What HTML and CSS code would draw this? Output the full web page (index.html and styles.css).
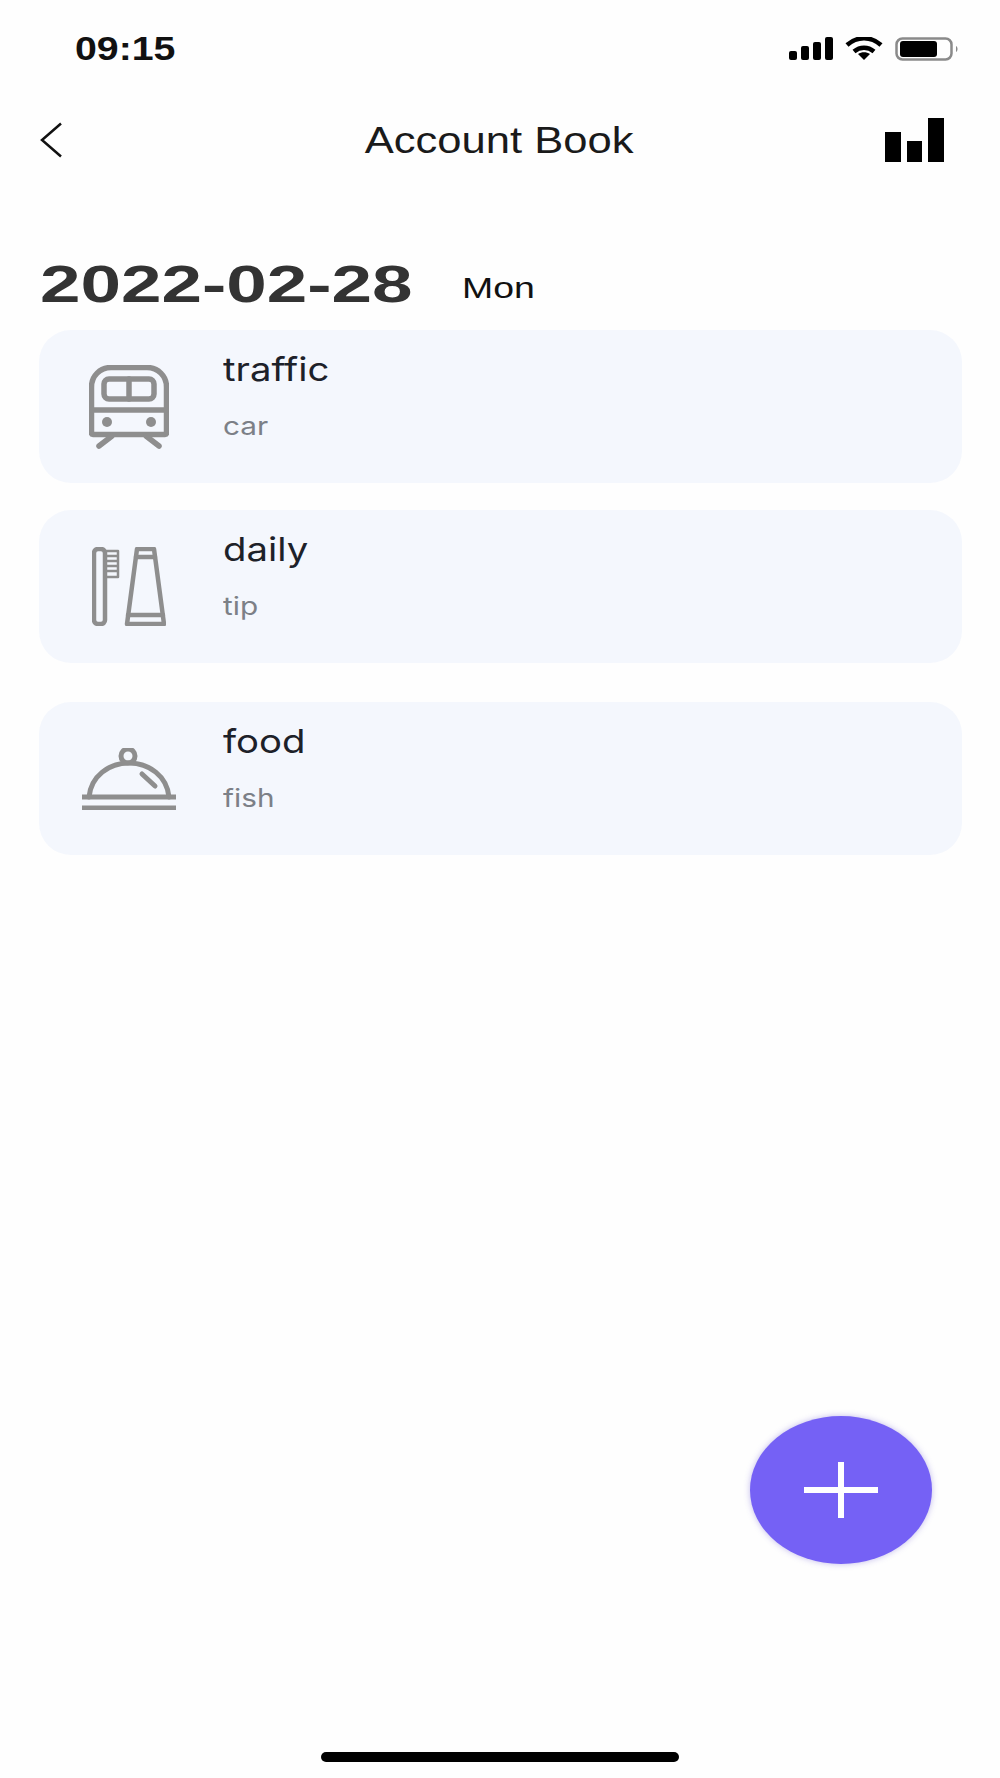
FILE: index.html
```html
<!DOCTYPE html>
<html>
<head>
	<meta charset="utf-8">
	<meta name="viewport" content="width=device-width,initial-scale=1.0">
	<title>Account Book</title>
	<link rel="stylesheet" href="styles.css">
</head>
<body>
	<div class="page">
		<!-- status bar -->
		<div class="status-bar">
			<span class="time">09:15</span>
			<div class="status-icons">
				<svg width="44" height="23" viewBox="0 0 44 23"><rect x="0" y="14" width="8" height="9" rx="2"/><rect x="12" y="9" width="8" height="14" rx="2"/><rect x="24" y="5" width="8" height="18" rx="2"/><rect x="36" y="0" width="8" height="23" rx="2"/></svg>
				<svg width="38" height="23" viewBox="0 0 38 23"><path class="wifi-arc" d="M2 8C12-1 26-1 36 8"/><path class="wifi-arc" d="M9 14.500C15 9.500 23 9.500 29 14.500"/><path d="M19 23L13 17C16.500 14.500 21.500 14.500 25 17Z"/></svg>
				<svg width="64" height="24" viewBox="0 0 64 24"><rect class="batt-case" x="1.500" y="1.500" width="55" height="21" rx="6"/><rect x="5" y="4" width="37" height="16" rx="3"/><path class="batt-nub" d="M61 9C63 10 63 14 61 15Z"/></svg>
			</div>
		</div>

		<!-- title bar -->
		<header class="nav">
			<svg class="back" width="24" height="36" viewBox="1 0 24 36"><path d="M22 1.500L3 18L22 34.500"/></svg>
			<h1 class="nav-title">Account Book</h1>
			<svg class="chart" width="59" height="44" viewBox="0 0 59 44"><rect x="0" y="14" width="16" height="30"/><rect x="22" y="23" width="15" height="21"/><rect x="43" y="0" width="16" height="44"/></svg>
		</header>

		<div class="date-row">
			<span class="date">2022-02-28</span>
			<span class="weekday">Mon</span>
		</div>

		<main class="list">
			<div class="item">
				<div class="item-icon">
					<svg class="icon-train" width="80" height="84" viewBox="0 0 80 84"><path d="M2.500 68V22C2.500 11 11 2.500 22 2.500H58C69 2.500 77.500 11 77.500 22V68C77.500 69 77 69.500 76 69.500H4C3 69.500 2.500 69 2.500 68Z"/><rect x="15" y="14" width="50" height="20" rx="5"/><path d="M40 14V34M2.500 45H77.500"/><path d="M23 71L10 81M57 71L70 81"/><circle class="dot" cx="18" cy="57" r="5"/><circle class="dot" cx="62" cy="57" r="5"/></svg>
				</div>
				<div class="item-text">
					<span class="item-name">traffic</span>
					<span class="item-sub">car</span>
				</div>
			</div>
			<div class="item">
				<div class="item-icon">
					<svg class="icon-brush" width="74" height="79" viewBox="0 0 74 79"><rect x="2" y="2" width="11" height="75" rx="4"/><path class="thin" d="M13 4H26V30H13M13 9H26M13 14H26M13 19H26M13 24H26"/><path d="M45 2H62L72 77H35Z"/><path d="M44 10H63M36 68H71"/></svg>
				</div>
				<div class="item-text">
					<span class="item-name">daily</span>
					<span class="item-sub">tip</span>
				</div>
			</div>
			<div class="item">
				<div class="item-icon">
					<svg width="94" height="62" viewBox="0 0 94 62"><circle cx="46" cy="8" r="7"/><path d="M7 49C9 28 27 15 47 15C67 15 85 28 87 49"/><path d="M0 49H94M0 60H94"/><path d="M60 26L73 38"/></svg>
				</div>
				<div class="item-text">
					<span class="item-name">food</span>
					<span class="item-sub">fish</span>
				</div>
			</div>
		</main>

		<div class="fab-row">
			<button class="fab">
				<svg width="74" height="56" viewBox="0 0 74 56"><path d="M0 28H74M37 0V56"/></svg>
			</button>
		</div>

		<div class="home-bar"></div>
	</div>
</body>
</html>
```

FILE: styles.css
```css
* {
	margin: 0;
	padding: 0;
	box-sizing: border-box;
}
body {
	font-family: "Liberation Sans", Arial, sans-serif;
	background: #fefefe;
}
svg {
	display: block;
}
.page {
	width: 1000px;
	height: 1778px;
	display: flex;
	flex-direction: column;
}

/* status bar */
.status-bar {
	height: 61px;
	padding: 37px 41px 0 75px;
	display: flex;
	justify-content: space-between;
	align-items: center;
}
.time {
	display: inline-block;
	font-size: 33px;
	font-weight: bold;
	line-height: 24px;
	color: #111;
	transform: scaleX(1.19);
	transform-origin: left center;
}
.status-icons {
	display: flex;
	gap: 12px;
}
.wifi-arc {
	fill: none;
	stroke: #000;
	stroke-width: 4.500;
}
.batt-case {
	fill: none;
	stroke: #8a8a8a;
	stroke-width: 2.500;
}
.batt-nub {
	fill: #8a8a8a;
}

/* title bar */
.nav {
	margin-top: 57px;
	padding: 0 41px 0 40px;
	height: 44px;
	display: grid;
	grid-template-columns: 1fr auto 1fr;
	align-items: center;
}
.back {
	fill: none;
	stroke: #111;
	stroke-width: 2.500;
}
.nav-title {
	padding-top: 2px;
	font-size: 36px;
	font-weight: normal;
	color: #1a1a1a;
	transform: scaleX(1.21);
}
.chart {
	justify-self: end;
	margin-right: 15px;
}

/* date */
.date-row {
	margin-top: 98px;
	padding-left: 40px;
	height: 48px;
	display: flex;
	align-items: flex-end;
}
.date {
	display: inline-block;
	font-size: 52px;
	line-height: 48px;
	font-weight: bold;
	color: #333;
	transform: scaleX(1.4);
	transform-origin: left center;
}
.weekday {
	display: inline-block;
	margin: 0 0 3px 156px;
	font-size: 29px;
	line-height: 34px;
	color: #111;
	transform: scaleX(1.29);
	transform-origin: left center;
}

/* cards */
.list {
	flex: 1;
	margin-top: 22px;
	padding: 0 38px 0 39px;
}
.item {
	height: 153px;
	margin-bottom: 29px;
	background: #f4f7fd;
	border-radius: 32px;
	display: flex;
	align-items: center;
}
.item:first-child {
	margin-bottom: 27px;
}
.item:nth-child(2) {
	margin-bottom: 39px;
}
.item-icon {
	width: 179px;
	flex-shrink: 0;
	display: flex;
	justify-content: center;
	padding-left: 1px;
}
.item-icon svg {
	fill: none;
	stroke: #8e8e8e;
	stroke-width: 5;
	stroke-linejoin: round;
	stroke-linecap: round;
}
.item-icon .icon-train {
	stroke-width: 5.500;
}
.item-icon .icon-brush {
	stroke-width: 4.500;
}
.item-icon .dot {
	fill: #8e8e8e;
	stroke: none;
}
.item-icon .thin {
	stroke-width: 2.500;
	stroke-linecap: butt;
}
.item-text {
	display: flex;
	flex-direction: column;
	align-self: flex-start;
	padding: 19px 0 0 5px;
}
.item-name {
	display: inline-block;
	font-family: Inter, "Liberation Sans", sans-serif;
	font-size: 33px;
	line-height: 40px;
	color: #1d2129;
	transform: scaleX(1.16);
	transform-origin: left center;
}
.item-sub {
	display: inline-block;
	margin-top: 22px;
	font-family: Inter, "Liberation Sans", sans-serif;
	font-size: 25px;
	line-height: 30px;
	color: #7c8087;
	transform: scaleX(1.19);
	transform-origin: left center;
}

/* add button */
.fab-row {
	display: flex;
	justify-content: flex-end;
	padding-right: 68px;
}
.fab {
	width: 182px;
	height: 148px;
	border: 0;
	border-radius: 50%;
	background: #7561f5;
	box-shadow: 0 0 6px rgba(80, 60, 200, .35);
	display: flex;
	align-items: center;
	justify-content: center;
}
.fab svg {
	fill: none;
	stroke: #fff;
	stroke-width: 6;
}

.home-bar {
	width: 358px;
	height: 10px;
	margin: 188px auto 16px;
	background: #000;
	border-radius: 5px;
}
```
